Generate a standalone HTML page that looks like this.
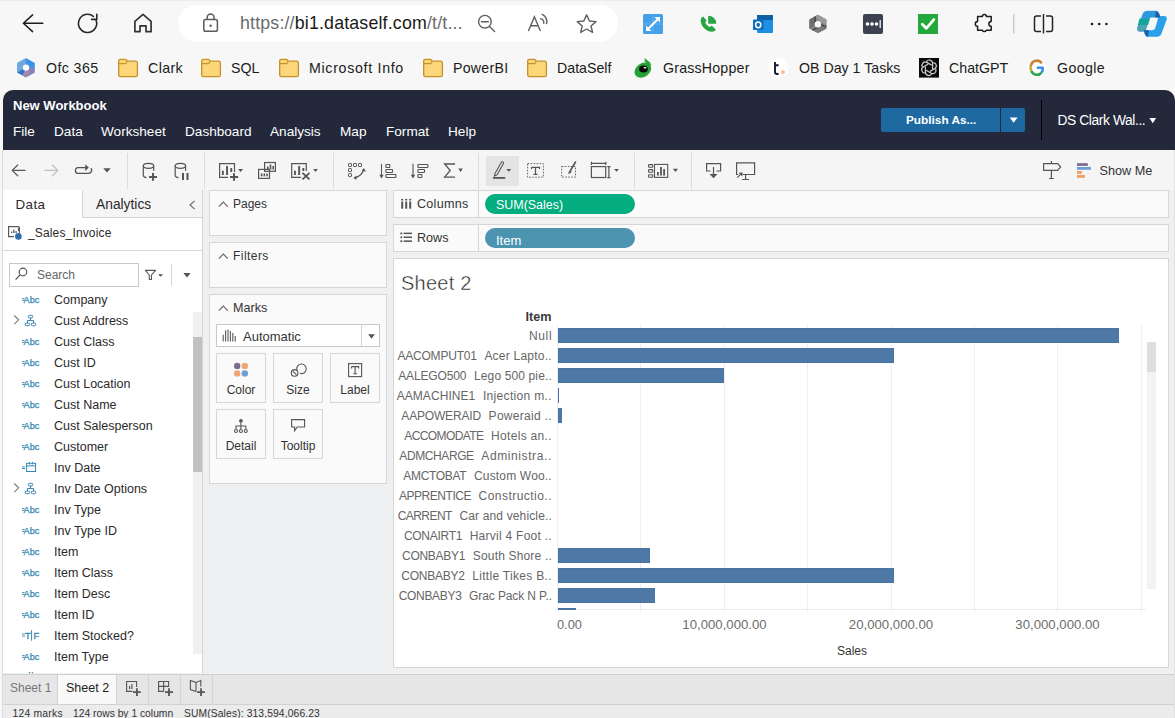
<!DOCTYPE html>
<html><head><meta charset="utf-8">
<style>
*{box-sizing:border-box;margin:0;padding:0}
html,body{width:1175px;height:718px;overflow:hidden;background:#f7f7f7;font-family:"Liberation Sans",sans-serif;color:#222}
.a{position:absolute}
.t{position:absolute;white-space:nowrap;line-height:1}
svg{position:absolute;overflow:visible}
.bm{position:absolute;top:61px;font-size:14.2px;color:#1b1b1b;white-space:nowrap;line-height:1}
.mn{position:absolute;top:124.5px;font-size:13.6px;color:#fff;white-space:nowrap;line-height:1}
.fl{position:absolute;left:54px;font-size:12.5px;color:#2a2a2a;white-space:nowrap;line-height:1}
.rl{position:absolute;right:623px;font-size:12px;color:#5f5f5f;white-space:pre;line-height:1;text-align:right}
.rl2{position:absolute;font-size:12px;color:#666;white-space:pre;line-height:1}
.bar{position:absolute;left:558px;height:15px;background:#4e79a7;box-shadow:inset 0 0 0 1px #4873a2}
.card{position:absolute;background:#fafafa;border:1px solid #d6d6d6}
.mk{position:absolute;width:50px;height:50px;border:1px solid #d6d6d6;background:#fafafa}
.mk span{position:absolute;left:0;right:0;top:30px;text-align:center;font-size:12px;color:#333;line-height:1}
</style></head><body>
<!-- ============ browser chrome ============ -->
<div class="a" style="left:0;top:0;width:1175px;height:1px;background:#ececec"></div>
<div class="a" style="left:178px;top:5px;width:440px;height:37px;border-radius:19px;background:#fff"></div>
<div class="t" style="left:240px;top:15px;font-size:17.8px;letter-spacing:0.17px;color:#1a1a1a"><span style="color:#6b6b6b">https://</span>bi1.dataself.com<span style="color:#6b6b6b">/t/t...</span></div>


<!-- browser icons -->
<svg style="left:0;top:0" width="1175" height="90" viewBox="0 0 1175 90">
 <g fill="none" stroke="#1c1c1c" stroke-width="1.5" stroke-linecap="round" stroke-linejoin="round">
  <path d="M32.6 14.9 L23.4 23.3 L32.6 31.6 M23.4 23.3 H42.8"/>
 </g>
 <g fill="none" stroke="#262626" stroke-width="1.6" stroke-linecap="round">
  <path d="M96.2 20.5 A9.1 9.1 0 1 1 93.5 16.5"/>
  <path d="M91.6 19.4 H96.8 V14.4" stroke-linejoin="round"/>
 </g>
 <path d="M134.9 31.7 V21.3 L143 14.3 L151.1 21.3 V31.7 H146 V25.9 H140 V31.7 Z" fill="none" stroke="#333" stroke-width="1.7" stroke-linejoin="round"/>
 <g fill="none" stroke="#5b5b5b" stroke-width="1.5">
  <rect x="203.8" y="19.6" width="13.6" height="11.7" rx="1.8"/>
  <path d="M207.2 19.6 V17.5 A3.4 3.4 0 0 1 214 17.5 V19.6"/>
 </g>
 <circle cx="210.6" cy="25.8" r="1.2" fill="#5b5b5b"/>
 <g fill="none" stroke="#5f5f5f" stroke-width="1.4" stroke-linecap="round">
  <circle cx="484.9" cy="21.7" r="6.3"/>
  <path d="M481.4 21.7 H488.4 M489.5 26.4 L494.6 31.6"/>
  <path d="M528.6 30.6 L534.4 16.7 L540.2 30.6 M530.6 25.7 H538.2"/>
  <path d="M540.6 18.6 A4.5 4.5 0 0 1 543.8 23.4 M542.2 14.4 A8.5 8.5 0 0 1 546.6 23.6"/>
  <path d="M586.6 14.9 L589.4 21 L596 21.6 L591 26 L592.6 32.4 L586.6 29 L580.6 32.4 L582.2 26 L577.2 21.6 L583.8 21 Z" stroke-linejoin="round"/>
 </g>
 <!-- blue expand -->
 <rect x="643" y="14" width="20" height="20" rx="1.5" fill="#46a0e8"/>
 <path d="M653 14 V34 M643 24 H663" stroke="#6cb6ef" stroke-width="0.8"/>
 <g stroke="#fff" stroke-width="2" fill="#fff" stroke-linecap="round">
  <path d="M647.5 29.5 L658.5 18.5" fill="none"/>
 </g>
 <path d="M660 17 L660 22.5 L654.5 17 Z M646 31 L646 25.5 L651.5 31 Z" fill="#fff"/>
 <!-- phone -->
 <path d="M701.5 17.5 C700 20 700.5 24.5 704.5 28.5 C708 32 712.5 32.5 715 30.8 L715.8 29.5 L711.8 25.8 L709.6 27 C707.5 26 706 24.5 705.2 22.6 L706.6 20.6 L703.2 16.6 Z" fill="#27a544"/>
 <path d="M708.2 15.8 A8 8 0 0 1 716.3 23.8 L708.2 23.8 Z" fill="#27a544"/>
 <!-- outlook -->
 <rect x="757" y="15" width="16" height="18" rx="1" fill="#1e90e0"/>
 <rect x="757" y="15" width="16" height="5" fill="#0f5fa8"/>
 <rect x="753" y="19.5" width="10.5" height="10.5" rx="0.8" fill="#0f6cbd"/>
 <ellipse cx="758.2" cy="24.8" rx="2.6" ry="2.9" fill="none" stroke="#fff" stroke-width="1.5"/>
 <!-- hexagon -->
 <path d="M817.9 14.7 L826.4 19.6 V28.8 L817.9 33.1 L809.4 28.8 V19.6 Z" fill="#858585"/>
 <path d="M809.4 19.6 L817.9 14.7 L815.5 17 V24.5 L809.4 28.8 Z" fill="#6e6e6e"/>
 <path d="M817.9 14.7 L826.4 19.6 V24.8 L820.5 21.8 L815.5 17 Z" fill="#9a9a9a"/>
 <path d="M826.4 24.8 V28.8 L817.9 33.1 L811.5 29.8 L820.5 26 Z" fill="#7a7a7a"/>
 <path d="M815.2 16.5 V22.8 M820.2 24 L826 27 M812.6 30 L818 27.2" stroke="#3d3d3d" stroke-width="1.2"/>
 <circle cx="817.9" cy="24.2" r="3.2" fill="#f7f7f7"/>
 <!-- lastpass -->
 <rect x="863" y="14" width="20" height="20" rx="2" fill="#3c4350"/>
 <circle cx="867.5" cy="24" r="1.8" fill="#fff"/><circle cx="872" cy="24" r="1.8" fill="#fff"/><circle cx="876.5" cy="24" r="1.8" fill="#fff"/>
 <rect x="879.6" y="20" width="1.2" height="8" fill="#fff"/>
 <!-- green check -->
 <rect x="918" y="14" width="20" height="20" fill="#23a83b"/>
 <path d="M922.3 24.2 L926.3 28.3 L933.8 19.6" fill="none" stroke="#fff" stroke-width="2.8" stroke-linecap="round" stroke-linejoin="round"/>
 <!-- puzzle -->
 <path d="M977.6 16.6 H982.4 A2 2 0 0 1 986.4 16.6 H991.2 V21.6 A2.3 2.3 0 0 0 991.2 26.2 V30.2 H986.2 A2 2 0 0 1 982.4 30.2 H977.6 V26.2 A2.3 2.3 0 0 1 977.6 21.6 Z" fill="none" stroke="#1c1c1c" stroke-width="1.5" stroke-linejoin="round"/>
 <rect x="1013" y="14" width="1.4" height="19.5" fill="#c8c8c8"/>
 <!-- split -->
 <g fill="none" stroke="#262626" stroke-width="1.5">
  <path d="M1041 16 H1036.5 A2 2 0 0 0 1034.5 18 V29.5 A2 2 0 0 0 1036.5 31.5 H1041"/>
  <path d="M1046 16 H1050.5 A2 2 0 0 1 1052.5 18 V29.5 A2 2 0 0 1 1050.5 31.5 H1046"/>
  <path d="M1043.5 14 V33.5"/>
 </g>
 <circle cx="1092" cy="24" r="1.3" fill="#1c1c1c"/><circle cx="1099.2" cy="24" r="1.3" fill="#1c1c1c"/><circle cx="1106.4" cy="24" r="1.3" fill="#1c1c1c"/>
 <!-- copilot -->
 <path d="M1143 13 C1144 11.5 1146 10.8 1148 10.8 H1155.5 C1157.5 10.8 1158.5 12 1159 13.5 L1160.5 17.5 H1152 C1150 17.5 1149 18.6 1148.5 20.5 L1146 29 C1145.5 30.8 1144.5 31.5 1142.5 31.5 H1140 C1137.8 31.5 1136.8 30 1137.3 28 Z" fill="#2d9ae0"/>
 <path d="M1138 25 L1148 23 L1146.2 29.5 C1145.6 31 1144.7 31.5 1142.8 31.5 H1140 C1137.8 31.5 1136.8 30 1137.3 28 Z" fill="#4fa1b5"/>
 <path d="M1139.5 18.5 H1150 L1148 25 H1137.8 Z" fill="#14a69a"/>
 <path d="M1161 34.8 C1160 36.3 1158 36.8 1156 36.8 H1148.5 C1146.5 36.8 1145.5 35.8 1145 34.2 L1143.6 30.2 H1152 C1154 30.2 1155 29 1155.5 27.2 L1158 18.5 C1158.5 16.8 1159.5 16 1161.5 16 H1164 C1166.2 16 1167.2 17.5 1166.7 19.5 Z" fill="#2aa0e8"/>
 <path d="M1155.8 11.3 C1157.5 11.5 1158.5 12.5 1159 13.5 L1160.5 17.5 H1155 Z" fill="#1c5fa8"/>
 <path d="M1148 36.8 C1146.5 36.5 1145.5 35.5 1145 34.2 L1143.6 30.2 H1149 Z" fill="#1c5fa8"/>
</svg>

<!-- ============ bookmarks ============ -->
<div class="bm" style="left:46px;letter-spacing:0.4px">Ofc 365</div>
<div class="bm" style="left:148px;letter-spacing:0.4px">Clark</div>
<div class="bm" style="left:231px">SQL</div>
<div class="bm" style="left:309px;letter-spacing:0.7px">Microsoft Info</div>
<div class="bm" style="left:453px;letter-spacing:0.25px">PowerBI</div>
<div class="bm" style="left:557px">DataSelf</div>
<div class="bm" style="left:663px;letter-spacing:0.2px">GrassHopper</div>
<div class="bm" style="left:799px">OB Day 1 Tasks</div>
<div class="bm" style="left:949px">ChatGPT</div>
<div class="bm" style="left:1057px;letter-spacing:0.4px">Google</div>


<!-- bookmark icons -->
<svg style="left:0;top:0" width="1175" height="90" viewBox="0 0 1175 90">
 <!-- ofc hex -->
 <path d="M26 58.2 L34.6 63 V72.4 L26 77.2 L17.2 72.4 V63 Z" fill="#4d9ae0"/>
 <path d="M26 58.2 L34.6 63 V67.8 L26 67.7 Z" fill="#3b95e6"/>
 <path d="M17.2 63 L26 58.2 V67.7 L17.2 72.4 Z" fill="#6fa8dc"/>
 <path d="M26 67.7 L34.6 67.8 V72.4 L26 77.2 Z" fill="#8d80b3"/>
 <path d="M17.2 72.4 L26 67.7 L26 77.2 Z" fill="#2f78c4"/>
 <path d="M26 67.7 L30 72 L26 77.2 L22.5 75.5 Z" fill="#a48ab0"/>
 <circle cx="26" cy="67.6" r="3.2" fill="#fff"/>
<path d="M118.7 62 V60.8 A1.5 1.5 0 0 1 120.2 59.3 H125 A2 2 0 0 1 126.6 60.2 L127.3 61.2 H136 A1.6 1.6 0 0 1 137.4 62.8 V75 A1.6 1.6 0 0 1 135.8 76.6 H120.3 A1.6 1.6 0 0 1 118.7 75 Z" fill="#fcd77a" stroke="#c6922a" stroke-width="1.3"/><path d="M118.9 63.6 H125.6 L127.3 61.3" fill="none" stroke="#c6922a" stroke-width="1.1"/><path d="M201.7 62 V60.8 A1.5 1.5 0 0 1 203.2 59.3 H208 A2 2 0 0 1 209.6 60.2 L210.3 61.2 H219 A1.6 1.6 0 0 1 220.4 62.8 V75 A1.6 1.6 0 0 1 218.8 76.6 H203.3 A1.6 1.6 0 0 1 201.7 75 Z" fill="#fcd77a" stroke="#c6922a" stroke-width="1.3"/><path d="M201.9 63.6 H208.6 L210.3 61.3" fill="none" stroke="#c6922a" stroke-width="1.1"/><path d="M279.7 62 V60.8 A1.5 1.5 0 0 1 281.2 59.3 H286 A2 2 0 0 1 287.6 60.2 L288.3 61.2 H297 A1.6 1.6 0 0 1 298.4 62.8 V75 A1.6 1.6 0 0 1 296.8 76.6 H281.3 A1.6 1.6 0 0 1 279.7 75 Z" fill="#fcd77a" stroke="#c6922a" stroke-width="1.3"/><path d="M279.9 63.6 H286.6 L288.3 61.3" fill="none" stroke="#c6922a" stroke-width="1.1"/><path d="M423.7 62 V60.8 A1.5 1.5 0 0 1 425.2 59.3 H430 A2 2 0 0 1 431.6 60.2 L432.3 61.2 H441 A1.6 1.6 0 0 1 442.4 62.8 V75 A1.6 1.6 0 0 1 440.8 76.6 H425.3 A1.6 1.6 0 0 1 423.7 75 Z" fill="#fcd77a" stroke="#c6922a" stroke-width="1.3"/><path d="M423.9 63.6 H430.6 L432.3 61.3" fill="none" stroke="#c6922a" stroke-width="1.1"/><path d="M527.7 62 V60.8 A1.5 1.5 0 0 1 529.2 59.3 H534 A2 2 0 0 1 535.6 60.2 L536.3 61.2 H545 A1.6 1.6 0 0 1 546.4 62.8 V75 A1.6 1.6 0 0 1 544.8 76.6 H529.3 A1.6 1.6 0 0 1 527.7 75 Z" fill="#fcd77a" stroke="#c6922a" stroke-width="1.3"/><path d="M527.9 63.6 H534.6 L536.3 61.3" fill="none" stroke="#c6922a" stroke-width="1.1"/>
 <!-- grasshopper -->
 <ellipse cx="642.8" cy="70.2" rx="9" ry="6.8" transform="rotate(-35 642.8 70.2)" fill="#25a236"/>
 <path d="M644.5 58 L650 62.5 L651.5 66 L648 64.5 L644.8 61.5 Z" fill="#25a236"/>
 <ellipse cx="643.5" cy="69" rx="4.4" ry="3.6" fill="#080808"/>
 <ellipse cx="645" cy="67.8" rx="1.6" ry="0.8" fill="#fff"/>
 <!-- t. -->
 <circle cx="778.7" cy="67.8" r="10" fill="#fff"/>
 <path d="M775 62 V72 Q775 74 777 74 H778.6 M775 65.3 H778.6" fill="none" stroke="#1a1733" stroke-width="1.9"/>
 <circle cx="783" cy="72" r="1.9" fill="#f5c08a"/>
 <!-- chatgpt -->
 <rect x="919" y="58" width="20" height="19.6" fill="#0b0b0b"/>
 <g fill="none" stroke="#cfcfcf" stroke-width="1.2" transform="translate(929 67.8)">
  <path d="M-2.5 -6.2 A3.3 3.3 0 0 1 3.6 -4.6 L3.6 1.2"/>
  <path d="M-2.5 -6.2 A3.3 3.3 0 0 1 3.6 -4.6 L3.6 1.2" transform="rotate(60)"/>
  <path d="M-2.5 -6.2 A3.3 3.3 0 0 1 3.6 -4.6 L3.6 1.2" transform="rotate(120)"/>
  <path d="M-2.5 -6.2 A3.3 3.3 0 0 1 3.6 -4.6 L3.6 1.2" transform="rotate(180)"/>
  <path d="M-2.5 -6.2 A3.3 3.3 0 0 1 3.6 -4.6 L3.6 1.2" transform="rotate(240)"/>
  <path d="M-2.5 -6.2 A3.3 3.3 0 0 1 3.6 -4.6 L3.6 1.2" transform="rotate(300)"/>
 </g>
 <!-- google -->
 <circle cx="1036.6" cy="67.8" r="9.5" fill="#fff"/>
 <g fill="none" stroke-width="2.6">
  <path d="M1041.8 63.4 A6 6 0 0 0 1030.8 66.2" stroke="#c9843a"/>
  <path d="M1030.8 66.2 A6 6 0 0 0 1031.4 71" stroke="#d6a23e"/>
  <path d="M1031.4 71 A6 6 0 0 0 1041.6 72.6" stroke="#2da44e"/>
  <path d="M1041.6 72.6 A6 6 0 0 0 1042.6 67.8 H1036.8" stroke="#3c8ee8"/>
 </g>
</svg>

<!-- ============ tableau header ============ -->
<div class="a" style="left:3px;top:90px;width:1172px;height:60px;background:#23283a;border-radius:10px 10px 0 0"></div>
<div class="t" style="left:13px;top:99px;font-size:13px;font-weight:700;color:#fff">New Workbook</div>
<div class="mn" style="left:13px">File</div>
<div class="mn" style="left:54px">Data</div>
<div class="mn" style="left:101px">Worksheet</div>
<div class="mn" style="left:185px">Dashboard</div>
<div class="mn" style="left:270px">Analysis</div>
<div class="mn" style="left:340px">Map</div>
<div class="mn" style="left:386px">Format</div>
<div class="mn" style="left:448px">Help</div>
<div class="a" style="left:881px;top:108px;width:144px;height:24px;background:#1f69a3;border-radius:2px"></div>
<div class="a" style="left:1000px;top:108px;width:1px;height:24px;background:#23283a"></div>
<div class="t" style="left:906px;top:115px;font-size:11.8px;font-weight:700;color:#fff">Publish As...</div>
<div class="a" style="left:1041px;top:100px;width:1px;height:40px;background:#000"></div>
<div class="t" style="left:1057.5px;top:113.5px;font-size:13.8px;letter-spacing:-0.4px;color:#fff">DS Clark Wal...</div>

<!-- ============ toolbar ============ -->
<div class="a" style="left:3px;top:150px;width:1172px;height:40px;background:#f5f5f5"></div>
<div class="a" style="left:127px;top:153px;width:1px;height:36px;background:#dcdcdc"></div>
<div class="a" style="left:204px;top:153px;width:1px;height:36px;background:#dcdcdc"></div>
<div class="a" style="left:333px;top:153px;width:1px;height:36px;background:#dcdcdc"></div>
<div class="a" style="left:478px;top:153px;width:1px;height:36px;background:#dcdcdc"></div>
<div class="a" style="left:634px;top:153px;width:1px;height:36px;background:#dcdcdc"></div>
<div class="a" style="left:691px;top:153px;width:1px;height:36px;background:#dcdcdc"></div>
<div class="a" style="left:486px;top:156px;width:33px;height:30px;background:#e4e4e4"></div>
<div class="t" style="left:1099.5px;top:164.6px;font-size:12.7px;color:#333">Show Me</div>


<!-- toolbar icons -->
<svg style="left:0;top:0" width="1175" height="190" viewBox="0 0 1175 190">
 <path d="M1009.7 117.6 H1017.6 L1013.65 122.8 Z" fill="#fff"/>
 <path d="M1149.4 118 H1156.1 L1152.75 123.3 Z" fill="#fff"/>
 <g fill="none" stroke="#5a5a5a" stroke-width="1.3" stroke-linecap="round" stroke-linejoin="round">
  <path d="M17.7 165 L12.2 170.4 L17.7 175.7 M12.2 170.4 H25"/>
 </g>
 <g fill="none" stroke="#c0c0c0" stroke-width="1.3" stroke-linecap="round" stroke-linejoin="round">
  <path d="M52.3 165 L57.8 170.4 L52.3 175.7 M57.8 170.4 H45"/>
 </g>
 <path d="M85.5 167.6 H77.2 A3.2 3.2 0 0 0 77.2 173.4 H88.6 A3.2 3.2 0 0 0 91 168.2" fill="none" stroke="#555" stroke-width="1.4"/>
 <path d="M85.2 164.3 L88.8 167.6 L85.2 170.9 Z" fill="#555"/>
 <path d="M103.3 168.2 H110.7 L107 172.6 Z" fill="#555"/>
 <!-- db icons -->
 <g fill="none" stroke="#555" stroke-width="1.2">
  <ellipse cx="148.5" cy="165.8" rx="5.2" ry="2.5"/>
  <path d="M153.7 165.8 V170.8 M143.3 165.8 V175.2 Q143.3 177.3 146.6 177.6"/>
  <ellipse cx="180.4" cy="165.8" rx="5.2" ry="2.5"/>
  <path d="M185.6 165.8 V170.8 M175.2 165.8 V175.2 Q175.2 177.3 178.5 177.6"/>
 </g>
 <path d="M149.1 176.9 H157 M153.05 173 V180.7" stroke="#555" stroke-width="2"/>
 <path d="M183 173 V180 M187.5 173 V180" stroke="#555" stroke-width="2"/>
 <!-- sheet icons -->
 <g fill="none" stroke="#555" stroke-width="1.2">
  <path d="M228 177.4 H219.6 V163.7 H234.5 V172"/>
  <rect x="264.6" y="162.5" width="10.8" height="8.8"/>
  <rect x="258.6" y="169.4" width="10.9" height="9"/>
  <path d="M301 177.4 H291.7 V163.7 H306.3 V171"/>
 </g>
 <g fill="#555">
  <rect x="221.9" y="170.7" width="1.9" height="4.3"/><rect x="226.1" y="166" width="1.9" height="9"/><rect x="230.3" y="168" width="1.9" height="4"/>
  <rect x="267" y="166.5" width="1.6" height="3"/><rect x="269.7" y="164.5" width="1.6" height="5"/><rect x="272.4" y="166" width="1.6" height="3.5"/>
  <rect x="260.8" y="173.5" width="1.6" height="2.8"/><rect x="263.5" y="173.5" width="1.6" height="2.8"/><rect x="266.2" y="173.5" width="1.6" height="2.8"/>
  <rect x="294" y="170.7" width="1.9" height="4.3"/><rect x="298.2" y="166" width="1.9" height="9"/><rect x="302.4" y="168" width="1.9" height="3"/>
  <path d="M238.1 168.9 H243.1 L240.6 172 Z"/>
  <path d="M313.2 168.9 H317.9 L315.55 172 Z"/>
  <path d="M458.4 168.5 H462.8 L460.6 172 Z"/>
  <path d="M506.4 169 H511.2 L508.8 171.7 Z"/>
  <path d="M614.2 169 H618.9 L616.55 171.8 Z"/>
  <path d="M672.9 168.8 H678 L675.45 171.9 Z"/>
 </g>
 <path d="M229.9 177 H238.1 M234 173.3 V180.7" stroke="#555" stroke-width="2"/>
 <path d="M302.5 172.8 L309.5 179.4 M309.5 172.8 L302.5 179.4" stroke="#555" stroke-width="1.8"/>
 <!-- swap -->
 <g fill="none" stroke="#555" stroke-width="1">
  <rect x="348.5" y="163.5" width="3" height="3" rx="0.6"/><rect x="353.5" y="163.5" width="3" height="3" rx="0.6"/><rect x="358.5" y="163.5" width="3" height="3" rx="0.6"/>
  <rect x="348.5" y="168.6" width="3" height="3" rx="0.6"/><rect x="348.5" y="173.6" width="3" height="3" rx="0.6"/>
  <path d="M355.5 177.6 Q361.6 176 363.6 170" stroke-width="1.2"/>
 </g>
 <path d="M363.8 167.9 L366 171.5 L361.8 171 Z M353.2 178 L356.8 175.6 L356.4 179.8 Z" fill="#555"/>
 <!-- sort -->
 <g fill="none" stroke="#555" stroke-width="1.1">
  <path d="M381.5 163.8 V176"/>
  <rect x="385.9" y="164.5" width="3.9" height="3" rx="0.6"/>
  <rect x="385.9" y="169.5" width="6.6" height="3" rx="0.6"/>
  <rect x="385.9" y="174.5" width="10" height="3" rx="0.6"/>
  <path d="M413 163.8 V176"/>
  <rect x="417.9" y="164.5" width="10" height="3" rx="0.6"/>
  <rect x="417.9" y="169.5" width="6.6" height="3" rx="0.6"/>
  <rect x="417.9" y="174.5" width="3.9" height="3" rx="0.6"/>
 </g>
 <path d="M379.3 174.8 H383.7 L381.5 178.4 Z M410.8 174.8 H415.2 L413 178.4 Z" fill="#555"/>
 <path d="M455 164 H444.6 L450.2 170.5 L444.6 177.2 H455" fill="none" stroke="#555" stroke-width="1.3"/>
 <!-- highlight etc -->
 <g fill="none" stroke="#555" stroke-width="1.1">
  <path d="M495 173.5 L501.5 162 A1.3 1.3 0 0 1 503.6 163.2 L497.2 174.7 L494.5 176 Z"/>
 </g>
 <rect x="493" y="177" width="12.2" height="1.8" fill="#555"/>
 <g fill="none" stroke="#666" stroke-width="1" stroke-dasharray="1.6 1.4">
  <rect x="527.6" y="163.6" width="15.8" height="13.6"/>
  <rect x="561.7" y="166.5" width="13.8" height="10.6"/>
 </g>
 <path d="M531.5 167.3 H539.5 V169 M531.5 167.3 V169 M535.5 167.3 V174.3 M533.5 174.3 H537.5" fill="none" stroke="#555" stroke-width="1.2"/>
 <path d="M575.5 162 L570.4 170.6" stroke="#555" stroke-width="1.6" stroke-linecap="round"/>
 <path d="M570.4 170.2 Q568.3 171 568.2 174 Q570.8 173.6 571.7 171.4 Z" fill="#555"/>
 <g fill="none" stroke="#555" stroke-width="1.2">
  <path d="M591.4 163.4 H605.8 M591.4 161.8 V165 M605.8 161.8 V165"/>
  <rect x="591.4" y="166.6" width="14.3" height="10.9"/>
  <path d="M608.9 166.6 V177.6 M607.3 166.6 H610.5 M607.3 177.6 H610.5"/>
 </g>
 <!-- show cards -->
 <g fill="none" stroke="#555" stroke-width="1.1">
  <rect x="648.5" y="164.6" width="4.3" height="2.6" rx="0.8"/>
  <rect x="648.5" y="169.6" width="4.3" height="2.6" rx="0.8"/>
  <rect x="648.5" y="174.7" width="4.3" height="2.6" rx="0.8"/>
  <rect x="654.5" y="164.4" width="13.2" height="13"/>
 </g>
 <rect x="657" y="172" width="1.8" height="3.6" fill="#555"/><rect x="660.1" y="167" width="1.8" height="8.6" fill="#555"/><rect x="663.2" y="169" width="1.8" height="6.6" fill="#555"/>
 <!-- download / present -->
 <g fill="none" stroke="#555" stroke-width="1.2">
  <path d="M710.5 171 H706.6 V163.6 H720.6 V171 H716.5"/>
  <path d="M713.5 167 V175"/>
  <path d="M738 174.5 H736.6 V162.8 H754.6 V174.5 H742.6"/>
  <path d="M745.6 174.5 V179.5 M742.1 179.5 H749"/>
  <path d="M737.2 177.6 L741 173.8"/>
 </g>
 <path d="M709.5 174 H717.5 L713.5 178.2 Z" fill="#555"/>
 <path d="M742.6 172.6 L742.3 176.6 L738.6 172.8 Z" fill="#555"/>
 <!-- signpost -->
 <g fill="none" stroke="#555" stroke-width="1.2" stroke-linejoin="round">
  <path d="M1043.6 163.6 H1057.6 L1060.6 167 L1057.6 170.3 H1043.6 Z"/>
  <path d="M1051.4 161 V163.6 M1051.4 170.3 V178.5 M1049.1 178.5 H1053.8"/>
 </g>
 <rect x="1077" y="163.2" width="10.8" height="2.7" fill="#7c6a93"/>
 <rect x="1077" y="167" width="14" height="2.8" fill="#6a9fd8"/>
 <rect x="1077" y="171" width="4.9" height="2.8" fill="#f0a064"/>
 <rect x="1077" y="175" width="8" height="2.8" fill="#f0a064"/>
</svg>

<!-- ============ main area ============ -->
<div class="a" style="left:3px;top:190px;width:1172px;height:484px;background:#eff0f2"></div>

<!-- data pane -->
<div class="a" style="left:3px;top:190px;width:200px;height:483px;background:#fff;border-right:1px solid #d4d4d4"></div>
<div class="a" style="left:82px;top:190px;width:120px;height:28px;background:#f5f5f5;border-left:1px solid #d4d4d4;border-bottom:1px solid #d4d4d4"></div>
<div class="t" style="left:15.5px;top:198px;font-size:13.4px;letter-spacing:0.4px;color:#2a2a2a">Data</div>
<div class="t" style="left:96px;top:198px;font-size:13.8px;color:#2a2a2a">Analytics</div>
<div class="t" style="left:28px;top:227px;font-size:12px;letter-spacing:0.15px;color:#2a2a2a">_Sales_Invoice</div>
<div class="a" style="left:3px;top:250px;width:199px;height:1px;background:#d9d9d9"></div>
<div class="a" style="left:9px;top:263px;width:130px;height:24px;border:1px solid #c8c8c8;background:#fff"></div>
<div class="t" style="left:37px;top:269px;font-size:12px;color:#666">Search</div>
<div class="a" style="left:171px;top:264px;width:1px;height:22px;background:#d4d4d4"></div>

<div class="a" style="left:193px;top:312px;width:9px;height:342px;background:#f0f0f0"></div>
<div class="a" style="left:193px;top:337px;width:9px;height:135px;background:#c1c1c1"></div>

<div class="fl" style="top:294px">Company</div>
<div class="fl" style="top:315px">Cust Address</div>
<div class="fl" style="top:336px">Cust Class</div>
<div class="fl" style="top:357px">Cust ID</div>
<div class="fl" style="top:378px">Cust Location</div>
<div class="fl" style="top:399px">Cust Name</div>
<div class="fl" style="top:420px">Cust Salesperson</div>
<div class="fl" style="top:441px">Customer</div>
<div class="fl" style="top:462px">Inv Date</div>
<div class="fl" style="top:483px">Inv Date Options</div>
<div class="fl" style="top:504px">Inv Type</div>
<div class="fl" style="top:525px">Inv Type ID</div>
<div class="fl" style="top:546px">Item</div>
<div class="fl" style="top:567px">Item Class</div>
<div class="fl" style="top:588px">Item Desc</div>
<div class="fl" style="top:609px">Item ID</div>
<div class="fl" style="top:630px">Item Stocked?</div>
<div class="fl" style="top:651px">Item Type</div>

<!-- field icons -->
<svg style="left:0;top:0" width="210" height="718" viewBox="0 0 210 718">
 <path d="M22 298.6 H24.6 M22 300.4 H24.6" stroke="#3488b0" stroke-width="0.9"/>
 <text x="23.6" y="302.9" font-family="Liberation Sans" font-size="9.2" fill="#3488b0" stroke="#3488b0" stroke-width="0.25">Abc</text>
 <g fill="none" stroke="#3a84b4" stroke-width="1"><rect x="28.3" y="315.3" width="4.4" height="2.6" rx="1"/><rect x="25.2" y="323.1" width="4.4" height="2.6" rx="1"/><rect x="31.3" y="323.1" width="4.4" height="2.6" rx="1"/><path d="M30.5 317.90000000000003 V320.5 M27.4 323.1 V320.5 H33.5 V323.1"/></g>
 <path d="M14.3 315.5 L18.6 319.8 L14.3 324.1" fill="none" stroke="#777" stroke-width="1.1"/>
 <path d="M22 340.6 H24.6 M22 342.4 H24.6" stroke="#3488b0" stroke-width="0.9"/>
 <text x="23.6" y="344.9" font-family="Liberation Sans" font-size="9.2" fill="#3488b0" stroke="#3488b0" stroke-width="0.25">Abc</text>
 <path d="M22 361.6 H24.6 M22 363.4 H24.6" stroke="#3488b0" stroke-width="0.9"/>
 <text x="23.6" y="365.9" font-family="Liberation Sans" font-size="9.2" fill="#3488b0" stroke="#3488b0" stroke-width="0.25">Abc</text>
 <path d="M22 382.6 H24.6 M22 384.4 H24.6" stroke="#3488b0" stroke-width="0.9"/>
 <text x="23.6" y="386.9" font-family="Liberation Sans" font-size="9.2" fill="#3488b0" stroke="#3488b0" stroke-width="0.25">Abc</text>
 <path d="M22 403.6 H24.6 M22 405.4 H24.6" stroke="#3488b0" stroke-width="0.9"/>
 <text x="23.6" y="407.9" font-family="Liberation Sans" font-size="9.2" fill="#3488b0" stroke="#3488b0" stroke-width="0.25">Abc</text>
 <path d="M22 424.6 H24.6 M22 426.4 H24.6" stroke="#3488b0" stroke-width="0.9"/>
 <text x="23.6" y="428.9" font-family="Liberation Sans" font-size="9.2" fill="#3488b0" stroke="#3488b0" stroke-width="0.25">Abc</text>
 <path d="M22 445.6 H24.6 M22 447.4 H24.6" stroke="#3488b0" stroke-width="0.9"/>
 <text x="23.6" y="449.9" font-family="Liberation Sans" font-size="9.2" fill="#3488b0" stroke="#3488b0" stroke-width="0.25">Abc</text>
 <path d="M22 466.90000000000003 H25 M22 468.5 H25" stroke="#3488b0" stroke-width="0.9"/>
 <g fill="none" stroke="#3488b0" stroke-width="1"><rect x="26.6" y="463.3" width="9" height="8.2"/><path d="M26.6 465.90000000000003 H35.6 M29.6 462.1 V464.5 M32.6 462.1 V464.5"/></g>
 <g fill="none" stroke="#3a84b4" stroke-width="1"><rect x="28.3" y="483.3" width="4.4" height="2.6" rx="1"/><rect x="25.2" y="491.1" width="4.4" height="2.6" rx="1"/><rect x="31.3" y="491.1" width="4.4" height="2.6" rx="1"/><path d="M30.5 485.90000000000003 V488.5 M27.4 491.1 V488.5 H33.5 V491.1"/></g>
 <path d="M14.3 483.5 L18.6 487.8 L14.3 492.1" fill="none" stroke="#777" stroke-width="1.1"/>
 <path d="M22 508.6 H24.6 M22 510.4 H24.6" stroke="#3488b0" stroke-width="0.9"/>
 <text x="23.6" y="512.9" font-family="Liberation Sans" font-size="9.2" fill="#3488b0" stroke="#3488b0" stroke-width="0.25">Abc</text>
 <path d="M22 529.6 H24.6 M22 531.4 H24.6" stroke="#3488b0" stroke-width="0.9"/>
 <text x="23.6" y="533.9" font-family="Liberation Sans" font-size="9.2" fill="#3488b0" stroke="#3488b0" stroke-width="0.25">Abc</text>
 <path d="M22 550.6 H24.6 M22 552.4 H24.6" stroke="#3488b0" stroke-width="0.9"/>
 <text x="23.6" y="554.9" font-family="Liberation Sans" font-size="9.2" fill="#3488b0" stroke="#3488b0" stroke-width="0.25">Abc</text>
 <path d="M22 571.6 H24.6 M22 573.4 H24.6" stroke="#3488b0" stroke-width="0.9"/>
 <text x="23.6" y="575.9" font-family="Liberation Sans" font-size="9.2" fill="#3488b0" stroke="#3488b0" stroke-width="0.25">Abc</text>
 <path d="M22 592.6 H24.6 M22 594.4 H24.6" stroke="#3488b0" stroke-width="0.9"/>
 <text x="23.6" y="596.9" font-family="Liberation Sans" font-size="9.2" fill="#3488b0" stroke="#3488b0" stroke-width="0.25">Abc</text>
 <path d="M22 613.6 H24.6 M22 615.4 H24.6" stroke="#3488b0" stroke-width="0.9"/>
 <text x="23.6" y="617.9" font-family="Liberation Sans" font-size="9.2" fill="#3488b0" stroke="#3488b0" stroke-width="0.25">Abc</text>
 <path d="M22 634 H25 M22 636.1 H25" stroke="#3488b0" stroke-width="0.9"/>
 <text x="25.1" y="639.2" font-family="Liberation Sans" font-size="9.4" fill="#3488b0" stroke="#3488b0" stroke-width="0.3">T</text>
 <path d="M31.6 630.2 V640.7" stroke="#3488b0" stroke-width="1"/>
 <text x="33.6" y="639.2" font-family="Liberation Sans" font-size="9.4" fill="#3488b0" stroke="#3488b0" stroke-width="0.3">F</text>
 <path d="M22 655.6 H24.6 M22 657.4 H24.6" stroke="#3488b0" stroke-width="0.9"/>
 <text x="23.6" y="659.9" font-family="Liberation Sans" font-size="9.2" fill="#3488b0" stroke="#3488b0" stroke-width="0.25">Abc</text>
 <circle cx="29.5" cy="672.6" r="0.8" fill="#3f8fb3"/><circle cx="32.4" cy="672.6" r="0.8" fill="#3f8fb3"/>
 <path d="M14 236.6 H8.6 V226.6 H18.4 L19.4 227.6 V233" fill="none" stroke="#5a5a5a" stroke-width="1.2"/>
 <rect x="18" y="228" width="1.6" height="3" fill="#5a5a5a"/>
 <rect x="11" y="231.5" width="1.3" height="1.5" fill="#5a5a5a"/><rect x="13.2" y="229.5" width="1.3" height="3.5" fill="#5a5a5a"/><rect x="15.4" y="231" width="1.3" height="2" fill="#5a5a5a"/>
 <circle cx="18.4" cy="236.4" r="3.6" fill="#fff"/><circle cx="18.4" cy="236.4" r="3.3" fill="#2f6ea9"/>
 <g fill="none" stroke="#555" stroke-width="1.2"><circle cx="23" cy="272" r="3.8"/><path d="M20.3 274.7 L15.6 279.6"/></g>
 <path d="M145.4 270.4 H155.5 L151.5 275 V279.5 H149.3 V275 Z" fill="none" stroke="#555" stroke-width="1.1" stroke-linejoin="round"/>
 <path d="M158.1 274.2 H163 L160.55 276.8 Z M183.4 273 H190.6 L187 277.4 Z" fill="#555"/>
 <path d="M194.6 200.8 L190 205 L194.6 209.2" fill="none" stroke="#666" stroke-width="1.1"/>
</svg>

<!-- cards -->
<div class="card" style="left:209px;top:190px;width:178px;height:46px"></div>
<div class="t" style="left:233px;top:198px;font-size:12px;color:#333">Pages</div>
<div class="card" style="left:209px;top:242px;width:178px;height:46px"></div>
<div class="t" style="left:233px;top:250px;font-size:12px;letter-spacing:0.45px;color:#333">Filters</div>
<div class="card" style="left:209px;top:294px;width:178px;height:190px"></div>
<div class="t" style="left:233px;top:302px;font-size:12.6px;color:#333">Marks</div>
<div class="a" style="left:216px;top:324px;width:164px;height:23px;border:1px solid #c8c8c8;background:#fff"></div>
<div class="a" style="left:361px;top:325px;width:1px;height:21px;background:#d4d4d4"></div>
<div class="t" style="left:243px;top:330px;font-size:13px;color:#333">Automatic</div>
<div class="mk" style="left:216px;top:353px"><span>Color</span></div>
<div class="mk" style="left:273px;top:353px"><span>Size</span></div>
<div class="mk" style="left:330px;top:353px"><span>Label</span></div>
<div class="mk" style="left:216px;top:409px"><span>Detail</span></div>
<div class="mk" style="left:273px;top:409px"><span>Tooltip</span></div>

<!-- shelves -->
<div class="card" style="left:393px;top:190px;width:776px;height:28px"></div>
<div class="a" style="left:478px;top:191px;width:1px;height:26px;background:#d6d6d6"></div>
<div class="t" style="left:417px;top:198px;font-size:12.6px;letter-spacing:0.25px;color:#333">Columns</div>
<div class="a" style="left:485px;top:194px;width:150px;height:20px;border-radius:10px;background:#03ad7f"></div>
<div class="t" style="left:496px;top:199px;font-size:12.45px;color:#fff">SUM(Sales)</div>
<div class="card" style="left:393px;top:224px;width:776px;height:28px"></div>
<div class="a" style="left:478px;top:225px;width:1px;height:26px;background:#d6d6d6"></div>
<div class="t" style="left:417px;top:232px;font-size:12.6px;color:#333">Rows</div>
<div class="a" style="left:485px;top:228px;width:150px;height:20px;border-radius:10px;background:#4a94b0"></div>
<div class="t" style="left:496px;top:233.5px;font-size:13px;color:#fff">Item</div>


<!-- marks icons -->
<svg style="left:0;top:0" width="1175" height="718" viewBox="0 0 1175 718">
 <g fill="none" stroke="#666" stroke-width="1.1">
  <path d="M218.8 206.6 L223.3 202 L227.8 206.6"/>
  <path d="M218.8 258.6 L223.3 254 L227.8 258.6"/>
  <path d="M218.8 310.6 L223.3 306 L227.8 310.6"/>
 </g>
 <g stroke="#5a5a5a" stroke-width="1.1">
  <path d="M223.2 341.4 V334.8 M225.6 341.4 V330.2 M228 341.4 V329.4 M230.4 341.4 V331 M232.8 341.4 V333 M235.2 341.4 V336"/>
 </g>
 <path d="M368.1 334.2 H374.9 L371.5 338.8 Z" fill="#555"/>
 <circle cx="237.2" cy="365.9" r="3.2" fill="#7b6a94"/>
 <circle cx="244.8" cy="365.9" r="3.2" fill="#f0a670"/>
 <circle cx="237.2" cy="373.4" r="3.2" fill="#f0a670"/>
 <circle cx="244.8" cy="373.4" r="3.2" fill="#6a9fd8"/>
 <g fill="none" stroke="#555" stroke-width="1.1">
  <path d="M296.9 370.2 A4.8 4.8 0 1 1 299.8 373.3"/>
  <circle cx="294.6" cy="372.9" r="3.3"/>
  <path d="M292.8 371.1 L296.4 374.7"/>
  <rect x="348.6" y="363.6" width="13" height="13"/>
  <path d="M291.6 419.6 H304.6 V427 H297.2 L294.6 430.8 V427 H291.6 Z" stroke-linejoin="miter"/>
  <circle cx="236" cy="431" r="1.5"/><circle cx="240.9" cy="431" r="1.5"/><circle cx="245.8" cy="431" r="1.5"/>
  <path d="M236 429 V426 H245.8 V429 M240.9 422.5 V429"/>
 </g>
 <circle cx="240.9" cy="420.8" r="1.9" fill="#555"/>
 <path d="M351.6 366.6 H358.6 V368.4 M351.6 366.6 V368.4 M355.1 366.6 V373.8 M353.3 373.8 H356.9" fill="none" stroke="#555" stroke-width="1.1"/>
 <!-- shelves icons -->
 <g fill="#555">
  <rect x="401.2" y="201.5" width="2" height="7.2"/><rect x="405.2" y="201.5" width="2" height="7.2"/><rect x="409.2" y="201.5" width="2" height="7.2"/>
  <rect x="401.2" y="198.9" width="2" height="1.6"/><rect x="405.2" y="198.9" width="2" height="1.6"/><rect x="409.2" y="198.9" width="2" height="1.6"/>
  <rect x="400.4" y="232.5" width="1.8" height="1.8"/><rect x="400.4" y="236.4" width="1.8" height="1.8"/><rect x="400.4" y="240.3" width="1.8" height="1.8"/>
  <rect x="403.6" y="232.6" width="8.4" height="1.5"/><rect x="403.6" y="236.5" width="8.4" height="1.5"/><rect x="403.6" y="240.4" width="8.4" height="1.5"/>
 </g>
</svg>

<!-- viz -->
<div class="a" style="left:393px;top:258px;width:776px;height:410px;background:#fff;border:1px solid #d6d6d6"></div>
<div class="t" style="left:401px;top:273px;font-size:20px;letter-spacing:0.25px;color:#222;-webkit-text-stroke:0.45px #fff">Sheet 2</div>

<!-- chart -->
<div class="a" style="left:640px;top:325px;width:1px;height:288px;background:#efefef"></div>
<div class="a" style="left:724px;top:325px;width:1px;height:288px;background:#efefef"></div>
<div class="a" style="left:807px;top:325px;width:1px;height:288px;background:#efefef"></div>
<div class="a" style="left:891px;top:325px;width:1px;height:288px;background:#efefef"></div>
<div class="a" style="left:974px;top:325px;width:1px;height:288px;background:#efefef"></div>
<div class="a" style="left:1057px;top:325px;width:1px;height:288px;background:#efefef"></div>
<div class="a" style="left:1141px;top:325px;width:1px;height:288px;background:#efefef"></div>
<div class="a" style="left:557px;top:325px;width:1px;height:285px;background:#f0f0f0"></div>
<div class="a" style="left:557px;top:609px;width:589px;height:1px;background:#ececec"></div>
<div class="t" style="right:623.5px;top:310.5px;font-size:12.6px;font-weight:700;color:#3a3a3a">Item</div>
<div class="bar" style="top:328px;width:561px"></div>
<div class="bar" style="top:348px;width:336px"></div>
<div class="bar" style="top:368px;width:166px"></div>
<div class="bar" style="top:388px;width:1px"></div>
<div class="bar" style="top:408px;width:4px"></div>
<div class="bar" style="top:548px;width:92px"></div>
<div class="bar" style="top:568px;width:336px"></div>
<div class="bar" style="top:588px;width:97px"></div>
<div class="bar" style="top:608px;width:18px;height:2px"></div>
<!-- rowlabels -->
<div class="rl2" style="left:528.9px;top:329.8px;letter-spacing:0.66px">Null</div>
<div class="rl2" style="left:397.4px;top:349.8px;letter-spacing:-0.20px">AACOMPUT01</div>
<div class="rl2" style="left:484.4px;top:349.8px;letter-spacing:0.23px">Acer Lapto..</div>
<div class="rl2" style="left:398.2px;top:369.8px;letter-spacing:-0.13px">AALEGO500</div>
<div class="rl2" style="left:474.0px;top:369.8px;letter-spacing:0.13px">Lego 500 pie..</div>
<div class="rl2" style="left:396.7px;top:389.8px;letter-spacing:0.06px">AAMACHINE1</div>
<div class="rl2" style="left:482.9px;top:389.8px;letter-spacing:0.33px">Injection m..</div>
<div class="rl2" style="left:401.3px;top:409.8px;letter-spacing:-0.17px">AAPOWERAID</div>
<div class="rl2" style="left:488.6px;top:409.8px;letter-spacing:0.30px">Poweraid ..</div>
<div class="rl2" style="left:404.3px;top:429.8px;letter-spacing:-0.59px">ACCOMODATE</div>
<div class="rl2" style="left:491.1px;top:429.8px;letter-spacing:0.31px">Hotels an..</div>
<div class="rl2" style="left:399.3px;top:449.8px;letter-spacing:-0.40px">ADMCHARGE</div>
<div class="rl2" style="left:481.3px;top:449.8px;letter-spacing:0.60px">Administra..</div>
<div class="rl2" style="left:403.3px;top:469.8px;letter-spacing:-0.31px">AMCTOBAT</div>
<div class="rl2" style="left:474.0px;top:469.8px;letter-spacing:0.17px">Custom Woo..</div>
<div class="rl2" style="left:399.0px;top:489.8px;letter-spacing:-0.47px">APPRENTICE</div>
<div class="rl2" style="left:478.6px;top:489.8px;letter-spacing:0.46px">Constructio..</div>
<div class="rl2" style="left:397.7px;top:509.8px;letter-spacing:-0.55px">CARRENT</div>
<div class="rl2" style="left:459.5px;top:509.8px;letter-spacing:0.14px">Car and vehicle..</div>
<div class="rl2" style="left:403.9px;top:529.8px;letter-spacing:-0.28px">CONAIRT1</div>
<div class="rl2" style="left:469.7px;top:529.8px;letter-spacing:0.26px">Harvil 4 Foot ..</div>
<div class="rl2" style="left:402.0px;top:549.8px;letter-spacing:-0.27px">CONBABY1</div>
<div class="rl2" style="left:472.8px;top:549.8px;letter-spacing:0.17px">South Shore ..</div>
<div class="rl2" style="left:401.3px;top:569.8px;letter-spacing:-0.26px">CONBABY2</div>
<div class="rl2" style="left:472.2px;top:569.8px;letter-spacing:0.31px">Little Tikes B..</div>
<div class="rl2" style="left:398.7px;top:589.8px;letter-spacing:-0.32px">CONBABY3</div>
<div class="rl2" style="left:469.1px;top:589.8px;letter-spacing:-0.11px">Grac Pack N P..</div>
<!-- /rowlabels -->
<div class="t" style="left:557px;top:619px;font-size:12.8px;color:#6e6e6e">0.00</div>
<div class="t" style="left:664.5px;width:120px;text-align:center;top:618px;font-size:13.2px;color:#6e6e6e">10,000,000.00</div>
<div class="t" style="left:831px;width:120px;text-align:center;top:618px;font-size:13.2px;color:#6e6e6e">20,000,000.00</div>
<div class="t" style="left:997.5px;width:120px;text-align:center;top:618px;font-size:13.2px;color:#6e6e6e">30,000,000.00</div>
<div class="t" style="left:837px;top:645px;font-size:12px;color:#333">Sales</div>
<div class="a" style="left:1147px;top:342px;width:9px;height:247px;background:#f3f3f3"></div>
<div class="a" style="left:1147px;top:342px;width:9px;height:30px;background:#dedede"></div>

<div class="a" style="left:2px;top:150px;width:1px;height:568px;background:#dcdcdc"></div>
<!-- sheet tabs / status -->
<div class="a" style="left:3px;top:674px;width:1172px;height:1px;background:#cfcfcf"></div>
<div class="a" style="left:3px;top:675px;width:1172px;height:29px;background:#e6e6e6"></div>
<div class="a" style="left:3px;top:704px;width:1172px;height:1px;background:#d2d2d2"></div>
<div class="a" style="left:3px;top:705px;width:1172px;height:13px;background:#ececec"></div>
<div class="a" style="left:1174px;top:150px;width:1px;height:568px;background:#e2e2e2"></div>
<div class="a" style="left:57px;top:675px;width:1px;height:29px;background:#d4d4d4"></div>
<div class="a" style="left:58px;top:675px;width:58px;height:29px;background:#f9f9f9"></div>
<div class="a" style="left:116px;top:675px;width:1px;height:29px;background:#d4d4d4"></div>
<div class="a" style="left:148px;top:675px;width:1px;height:29px;background:#d4d4d4"></div>
<div class="a" style="left:180px;top:675px;width:1px;height:29px;background:#d4d4d4"></div>
<div class="a" style="left:212px;top:675px;width:1px;height:29px;background:#d4d4d4"></div>
<div class="t" style="left:10px;top:682px;font-size:12px;color:#777">Sheet 1</div>
<div class="t" style="left:66px;top:682px;font-size:12.5px;color:#222">Sheet 2</div>
<svg style="left:0;top:0" width="1175" height="718" viewBox="0 0 1175 718">
 <g fill="none" stroke="#555" stroke-width="1.1">
  <path d="M132.5 691.4 H126.6 V681.5 H136.6 V687"/>
  <path d="M163.5 691.4 H158.6 V681.5 H168.6 V687 M158.6 686.4 H168.6 M163.6 681.5 V691.4"/>
  <path d="M196 686.5 V682.5 L200.8 680.6 V686.5 M196 691.4 L190.4 689.5 V680.6 L196 682.5 V691.4"/>
 </g>
 <rect x="129" y="686" width="1.2" height="3" fill="#555"/><rect x="131.3" y="684" width="1.2" height="5" fill="#555"/>
 <path d="M133 692.1 H140.8 M136.9 688.3 V695.9 M165 692.1 H173 M169 688.3 V695.9 M197.1 692.1 H204.9 M201 688.3 V695.9" stroke="#555" stroke-width="1.8"/>
</svg>
<div class="t" style="left:12.5px;top:709px;font-size:10.3px;letter-spacing:0.25px;color:#333">124 marks</div>
<div class="t" style="left:73px;top:709px;font-size:10.3px;color:#333">124 rows by 1 column</div>
<div class="t" style="left:184px;top:709px;font-size:10.3px;letter-spacing:0.12px;color:#333">SUM(Sales): 313,594,066.23</div>

</body></html>
